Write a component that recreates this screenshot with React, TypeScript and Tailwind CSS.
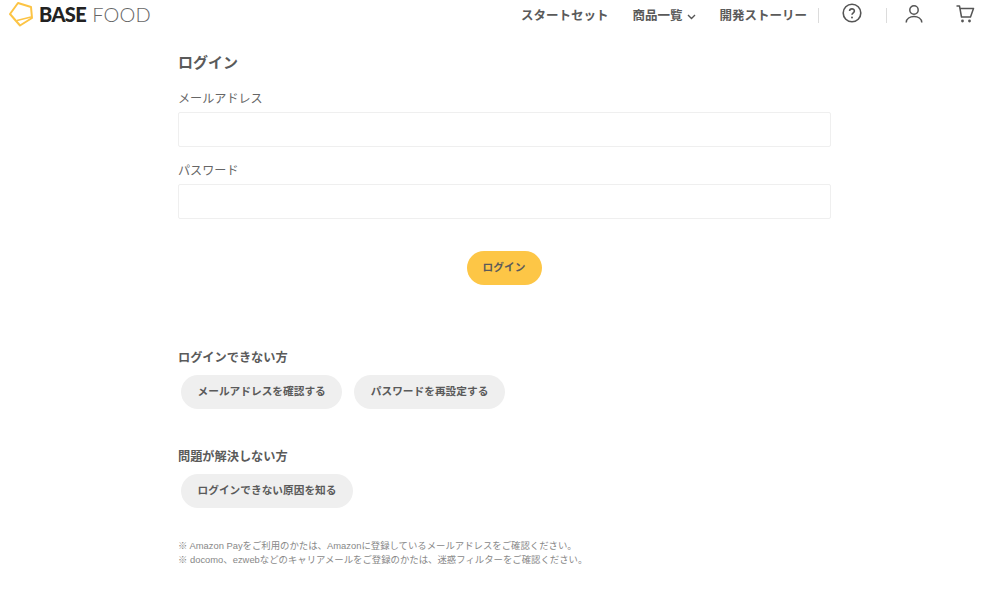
const FONT = "font-['Liberation_Sans','Noto_Sans_CJK_JP',sans-serif]";

function Logo() {
  return (
    <div className="flex items-center">
      <svg width="26" height="26" viewBox="0 0 26 26" fill="none" className="ml-[8px]">
        <path d="M10 2 L23 6 L24 17 L12 24.5 L2 13 Z" stroke="#fcc445" strokeWidth="2" strokeLinejoin="round" />
        <path d="M9 19.5 L23 16" stroke="#fcc445" strokeWidth="1.5" />
      </svg>
      <span className="ml-[5px] text-[20px] leading-none tracking-[-0.6px] font-['Lato',sans-serif] font-black text-[#222]">BASE</span>
      <span className="ml-[6px] text-[20px] leading-none tracking-[0.2px] font-['Lato',sans-serif] font-light text-[#666]">FOOD</span>
    </div>
  );
}

function Divider() {
  return <div className="w-px h-[15px] mt-[3px] bg-[#dcdcdc]" />;
}

function Header() {
  return (
    <header className="flex items-center justify-between h-[28px] text-[#5a5a5a]">
      <Logo />
      <nav className="flex items-center text-[12.5px] font-bold leading-none">
        <div className="flex items-center pt-[4px]">
          <span>スタートセット</span>
          <span className="ml-[24px] flex items-center">
            商品一覧
            <svg width="9" height="6" viewBox="0 0 9 6" fill="none" className="ml-[5px] mt-[2px]">
              <path d="M1 1 L4.5 4.5 L8 1" stroke="#555" strokeWidth="1.4" />
            </svg>
          </span>
          <span className="ml-[23px]">開発ストーリー</span>
        </div>
        <div className="ml-[11px]"><Divider /></div>
        <svg width="20" height="20" viewBox="0 0 20 20" fill="none" className="ml-[23px] -mt-[3px]">
          <circle cx="10" cy="10" r="8.8" stroke="#555" strokeWidth="1.6" />
          <path d="M7.6 8 C7.6 5.2 12.4 5.2 12.4 8 C12.4 9.8 10 9.8 10 11.8" stroke="#555" strokeWidth="1.6" fill="none" />
          <circle cx="10" cy="14.4" r="1" fill="#555" />
        </svg>
        <div className="ml-[24px]"><Divider /></div>
        <svg width="18" height="18" viewBox="0 0 18 18" fill="none" className="ml-[18px] -mt-[1px]">
          <circle cx="9" cy="5" r="4.2" stroke="#555" strokeWidth="1.5" />
          <path d="M1.2 17.5 C1.2 9.5 16.8 9.5 16.8 17.5" stroke="#555" strokeWidth="1.5" />
        </svg>
        <svg width="19" height="18" viewBox="0 0 19 18" fill="none" className="ml-[33px] mr-[25px] -mt-[1px]">
          <path d="M0.5 1 H3.5 L5.5 12 H14.5 L17.5 3.5 H4" stroke="#555" strokeWidth="1.5" strokeLinejoin="round" />
          <circle cx="6.5" cy="16" r="1.4" fill="#555" />
          <circle cx="13.5" cy="16" r="1.4" fill="#555" />
        </svg>
      </nav>
    </header>
  );
}

function Field({ label, type }: { label: string; type: string }) {
  return (
    <div>
      <label className="block pt-px text-[12.1px] leading-[18px] text-[#666]">{label}</label>
      <input type={type} className="block mt-[4px] w-[653px] h-[35px] bg-white border border-[#efefef] rounded-[2px]" />
    </div>
  );
}

function PillButton({ children }: { children: string }) {
  return (
    <button className="h-[34px] px-[16.5px] pb-px rounded-full bg-[#efefef] text-[10.7px] font-bold text-[#5a5a5a] leading-none">
      {children}
    </button>
  );
}

export default function App() {
  return (
    <div className={`${FONT} bg-white w-[1000px] h-[608px] overflow-hidden`}>
      <Header />
      <main className="ml-[178px] w-[653px]">
        <h1 className="mt-[25px] text-[15px] leading-[20px] font-bold text-[#5a5a5a]">ログイン</h1>
        <div className="mt-[16px] flex flex-col gap-[14px]">
          <Field label="メールアドレス" type="email" />
          <Field label="パスワード" type="password" />
        </div>
        <div className="mt-[32px] flex justify-center">
          <button className="w-[75px] h-[34px] pb-px pr-px rounded-full bg-[#fdc646] text-[10.7px] font-bold text-[#5a5a5a] leading-none">ログイン</button>
        </div>
        <h2 className="mt-[64px] text-[12.2px] leading-[18px] font-bold text-[#5a5a5a]">ログインできない方</h2>
        <div className="mt-[8px] ml-[3px] flex gap-[12px]">
          <PillButton>メールアドレスを確認する</PillButton>
          <PillButton>パスワードを再設定する</PillButton>
        </div>
        <h2 className="mt-[39px] text-[12.2px] leading-[18px] font-bold text-[#5a5a5a]">問題が解決しない方</h2>
        <div className="mt-[8px] ml-[3px] flex">
          <PillButton>ログインできない原因を知る</PillButton>
        </div>
        <div className="mt-[31px] text-[9.4px] leading-[14px] text-[#888]">
          <p>※ Amazon Payをご利用のかたは、Amazonに登録しているメールアドレスをご確認ください。</p>
          <p>※ docomo、ezwebなどのキャリアメールをご登録のかたは、迷惑フィルターをご確認ください。</p>
        </div>
      </main>
    </div>
  );
}
